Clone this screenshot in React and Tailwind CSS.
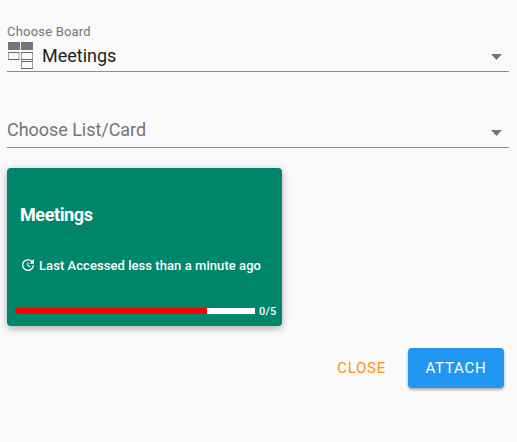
function BoardIcon() {
  return (
    <svg className="block h-[28px] w-[26px] shrink-0" viewBox="0 0 26 28" fill="none">
      <rect x="0" y="0" width="12" height="8" fill="#757575" />
      <rect x="13" y="0" width="12" height="8" fill="#757575" />
      <g stroke="#858585" strokeWidth="1">
        <path d="M0.5 10v8M11 10v8M13.5 10v17M24.5 10v17" stroke="#a0a0a0" />
        <path d="M0 10.5h11.5M0 17.5h11.5M13 10.5h12M13 17.5h12M13 19.5h12M13 26.5h12" stroke="#666666" />
      </g>
    </svg>
  );
}

function Caret() {
  return (
    <svg className="block h-[6px] w-[11px] shrink-0" viewBox="0 0 10 5" preserveAspectRatio="none">
      <path d="M0 0h10L5 5z" fill="#757575" />
    </svg>
  );
}

function UpdateIcon() {
  return (
    <svg className="block size-4 shrink-0" viewBox="0 0 24 24" fill="currentColor">
      <path d="M21,10.12H14.22L16.96,7.3C14.23,4.6 9.81,4.5 7.08,7.2C4.35,9.91 4.35,14.28 7.08,17C9.81,19.7 14.23,19.7 16.96,17C18.32,15.65 19,14.08 19,12.1H21C21,14.08 20.12,16.65 18.36,18.39C14.85,21.87 9.15,21.87 5.64,18.39C2.14,14.92 2.11,9.28 5.62,5.81C9.13,2.34 14.76,2.34 18.27,5.81L21,3V10.12M12.5,8V12.25L16,14.33L15.28,15.54L11,13V8H12.5Z" />
    </svg>
  );
}

export default function App() {
  return (
    <div className="h-[442px] w-[517px] bg-[#fafafa] pt-6 pr-2 pl-[7px] font-['Roboto',sans-serif]">
      <div className="h-12 border-b border-[#8c8c8c]">
        <div className="h-4 text-[13px] leading-4 tracking-[0.2px] text-[#757575]">Choose Board</div>
        <div className="flex items-start pt-[2px] pr-[7px] pl-px">
          <BoardIcon />
          <div className="flex-1 pt-px pl-2 text-[18px] leading-[26px] text-[#212121]">Meetings</div>
          <div className="pt-3"><Caret /></div>
        </div>
      </div>

      <div className="mt-10 flex h-9 items-start justify-between border-b border-[#8c8c8c] pr-[7px]">
        <div className="pt-[6px] text-[18px] leading-6 tracking-[-0.04px] text-[#757575]">Choose List/Card</div>
        <div className="pt-[18px]"><Caret /></div>
      </div>

      <div className="mt-5 flex h-[158px] w-[275px] flex-col rounded bg-[#00866a] text-white shadow-[0_3px_6px_rgba(0,0,0,0.2),0_1px_12px_rgba(0,0,0,0.12)]">
        <div className="pt-[35px] pl-[13px] text-[18px] leading-6 font-bold tracking-[-0.4px]">Meetings</div>
        <div className="mt-[30px] flex h-4 items-center gap-[3px] pl-[13px] text-[13px] leading-4 font-medium">
          <UpdateIcon />
          <span className="pt-px whitespace-nowrap tracking-[0.06px]">Last Accessed less than a minute ago</span>
        </div>
        <div className="mt-[31px] flex h-[14px] items-center gap-1 pl-2">
          <div className="h-[6px] w-[240px] bg-white">
            <div className="h-full w-4/5 bg-[#ff0000]" />
          </div>
          <span className="pt-px text-[11px] leading-[14px] font-medium tracking-[0.2px]">0/5</span>
        </div>
      </div>

      <div className="mt-[22px] flex justify-end gap-[22px] pr-[5px] text-[15px] tracking-[0.75px]">
        <button className="h-10 text-[#ff9017]">CLOSE</button>
        <button className="h-10 w-24 rounded bg-[#2196f3] text-white shadow-[0_2px_3px_rgba(0,0,0,0.3)]">ATTACH</button>
      </div>
    </div>
  );
}
